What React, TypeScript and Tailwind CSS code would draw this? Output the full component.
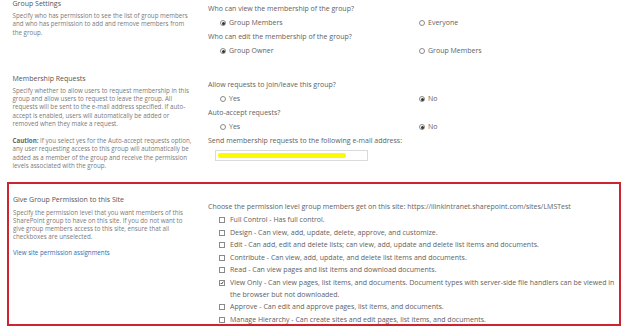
import React from 'react';

const font = { fontFamily: '"Open Sans", "Noto Sans", "Liberation Sans", sans-serif' };

function Radio({ checked }: { checked?: boolean }) {
  return (
    <span className="inline-flex w-[6px] h-[6px] rounded-full border border-[#8a8a8a] bg-white items-center justify-center mr-[3px] shrink-0">
      {checked && <span className="block w-[3px] h-[3px] rounded-full bg-[#333]" />}
    </span>
  );
}

function Checkbox({ checked }: { checked?: boolean }) {
  return (
    <span className="inline-flex w-[6px] h-[6px] border border-[#8a8a8a] bg-white items-center justify-center shrink-0 mt-[3px]">
      {checked && (
        <svg viewBox="0 0 6 6" className="w-[6px] h-[6px]">
          <path d="M1 3 L2.5 4.5 L5 1" fill="none" stroke="#222" strokeWidth="1.2" />
        </svg>
      )}
    </span>
  );
}

function RadioRow({ a, b, first }: { a: string; b: string; first: boolean }) {
  return (
    <div className="flex items-center h-[14px] pl-[12px]">
      <div className="flex items-center w-[199px]">
        <Radio checked={first} />
        <span>{a}</span>
      </div>
      <div className="flex items-center">
        <Radio checked={!first} />
        <span>{b}</span>
      </div>
    </div>
  );
}

const permissions = [
  { label: 'Full Control - Has full control.' },
  { label: 'Design - Can view, add, update, delete, approve, and customize.' },
  { label: 'Edit - Can add, edit and delete lists; can view, add, update and delete list items and documents.' },
  { label: 'Contribute - Can view, add, update, and delete list items and documents.' },
  { label: 'Read - Can view pages and list items and download documents.' },
  {
    label:
      'View Only - Can view pages, list items, and documents. Document types with server-side file handlers can be viewed in the browser but not downloaded.',
    checked: true,
  },
  { label: 'Approve - Can edit and approve pages, list items, and documents.' },
  { label: 'Manage Hierarchy - Can create sites and edit pages, list items, and documents.' },
];

export default function App() {
  return (
    <div className="w-[623px] h-[328px] bg-white overflow-hidden" style={font}>
      {/* Group Settings */}
      <div className="flex h-[74px]">
        <div className="w-[208px] pl-[12.5px] pr-[6px]">
          <div className="text-[7px] leading-[8px] text-[#555]">Group Settings</div>
          <p className="mt-[3.5px] text-[6.2px] leading-[8.5px] text-[#7a7a7a]">
            Specify who has permission to see the list of group members
            <br />
            and who has permission to add and remove members from
            <br />
            the group.
          </p>
        </div>
        <div className="flex-1 pt-[2px] text-[7px] text-[#626262]">
          <div className="h-[14px] flex items-center">Who can view the membership of the group?</div>
          <RadioRow a="Group Members" b="Everyone" first />
          <div className="h-[14px] flex items-center">Who can edit the membership of the group?</div>
          <RadioRow a="Group Owner" b="Group Members" first />
        </div>
      </div>

      {/* Membership Requests */}
      <div className="flex h-[108px]">
        <div className="w-[208px] pl-[12.5px] pr-[6px] pt-[1px]">
          <div className="text-[7px] leading-[8px] text-[#555]">Membership Requests</div>
          <p className="mt-[3.5px] text-[6.2px] leading-[8.4px] text-[#7a7a7a]">
            Specify whether to allow users to request membership in this
            <br />
            group and allow users to request to leave the group. All
            <br />
            requests will be sent to the e-mail address specified. If auto-
            <br />
            accept is enabled, users will automatically be added or
            <br />
            removed when they make a request.
          </p>
          <p className="mt-[8.6px] text-[6.2px] leading-[8.3px] text-[#7a7a7a]">
            <b className="font-bold text-[#666]">Caution:</b> If you select yes for the Auto-accept requests option,
            <br />
            any user requesting access to this group will automatically be
            <br />
            added as a member of the group and receive the permission
            <br />
            levels associated with the group.
          </p>
        </div>
        <div className="flex-1 pt-[4px] text-[7px] text-[#626262]">
          <div className="h-[14px] flex items-center">Allow requests to join/leave this group?</div>
          <RadioRow a="Yes" b="No" first={false} />
          <div className="h-[14px] flex items-center">Auto-accept requests?</div>
          <RadioRow a="Yes" b="No" first={false} />
          <div className="h-[14px] flex items-center">Send membership requests to the following e-mail address:</div>
          <div className="ml-[7px] mt-[2px] w-[153px] h-[11px] border border-[#dadada] bg-white flex items-center pl-[2px]">
            <div className="w-[128px] h-[5px] rounded-[2px] bg-[#fbfb05]" />
          </div>
        </div>
      </div>

      {/* Give Group Permission */}
      <div className="ml-[7px] w-[614px] h-[144px] border-2 border-[#cc2530] flex overflow-hidden">
        <div className="w-[199px] pl-[4px] pr-[6px] pt-[12px] shrink-0">
          <div className="text-[7px] leading-[8px] text-[#555]">Give Group Permission to this Site</div>
          <p className="mt-[4.5px] text-[6.2px] leading-[8px] text-[#7a7a7a]">
            Specify the permission level that you want members of this
            <br />
            SharePoint group to have on this site. If you do not want to
            <br />
            give group members access to this site, ensure that all
            <br />
            checkboxes are unselected.
          </p>
          <a href="#" className="block mt-[7px] text-[6.2px] leading-[9px] text-[#2f6db5]">
            View site permission assignments
          </a>
        </div>
        <div className="flex-1 pt-[16px] text-[7px] text-[#626262]">
          <div className="h-[14px] flex items-center whitespace-nowrap">
            Choose the permission level group members get on this site: https://ilinkintranet.sharepoint.com/sites/LMSTest
          </div>
          <div className="flex flex-col gap-[0.5px]">
            {permissions.map((p) => (
              <div key={p.label} className="flex pl-[11px] w-[412px]">
                <Checkbox checked={p.checked} />
                <span className="ml-[5px] leading-[12px]">{p.label}</span>
              </div>
            ))}
          </div>
        </div>
      </div>
    </div>
  );
}
